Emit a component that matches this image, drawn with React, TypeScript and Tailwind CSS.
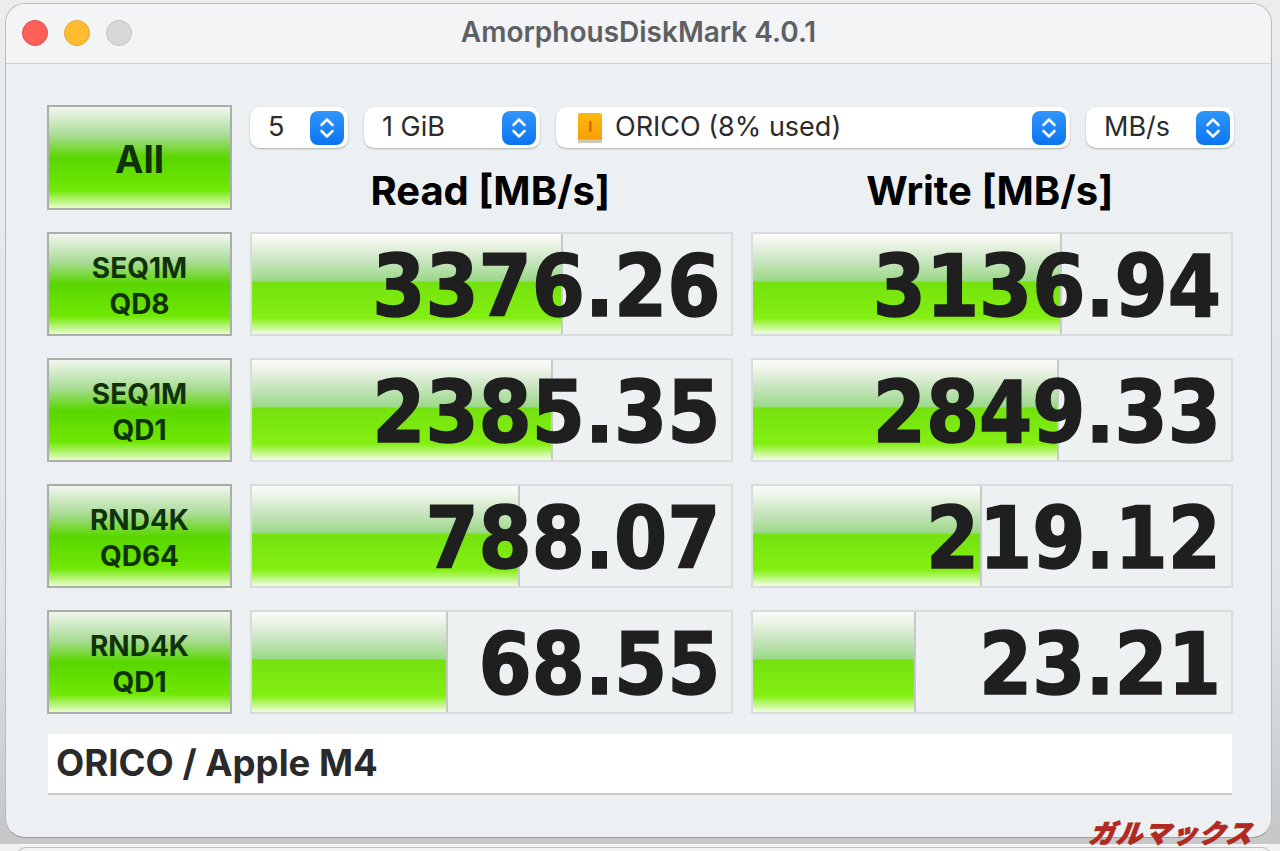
import React from "react";

const rows = [
  { a: "SEQ1M", b: "QD8", r: "3376.26", rw: 312, w: "3136.94", ww: 310 },
  { a: "SEQ1M", b: "QD1", r: "2385.35", rw: 302, w: "2849.33", ww: 307 },
  { a: "RND4K", b: "QD64", r: "788.07", rw: 269, w: "219.12", ww: 230 },
  { a: "RND4K", b: "QD1", r: "68.55", rw: 197, w: "23.21", ww: 164 },
];

function Stepper() {
  return (
    <span className="flex h-[34px] w-[34px] shrink-0 items-center justify-center rounded-[8px] bg-gradient-to-b from-[#2f96fb] to-[#0a74f0]">
      <svg width="18" height="26" viewBox="0 0 18 26" fill="none" stroke="#eef6ff" strokeWidth="2.6" strokeLinecap="round" strokeLinejoin="round">
        <path d="M3.5 10 L9 4.5 L14.5 10" />
        <path d="M3.5 16 L9 21.5 L14.5 16" />
      </svg>
    </span>
  );
}

function Select({ width, children }: { width: string; children: React.ReactNode }) {
  return (
    <div className={`flex h-[41px] items-center justify-between rounded-[10px] bg-white pl-[18px] pr-[4px] text-[27px] text-[#2b2b2b] shadow-[0_1px_2px_rgba(0,0,0,0.28)] ${width}`}>
      {children}
      <Stepper />
    </div>
  );
}

function Bar({ value, width }: { value: string; width: number }) {
  return (
    <div className="relative h-[104px] flex-1 overflow-hidden border-2 border-[#d9dcdd] bg-[#eef1f2]">
      <div
        className="-ml-px h-full border-r-2 border-[#c6c9c9] bg-[linear-gradient(to_bottom,#fafbf8_0%,#f0f6ec_8%,#c6e4bc_28%,#9ad988_47%,#74e20e_48%,#84ef12_84%,#f2fde4_100%)]"
        style={{ width }}
      />
      <span className="absolute right-[10px] top-[7px] font-['DejaVu_Sans_Condensed','DejaVu_Sans',sans-serif] text-[85px] font-bold leading-[92px] text-[#1f1f1f] [-webkit-text-stroke:1.5px_#1f1f1f]">
        {value}
      </span>
    </div>
  );
}

function GreenButton({ children, className }: { children: React.ReactNode; className?: string }) {
  return (
    <div className={`flex w-[185px] shrink-0 flex-col items-center justify-center border-2 border-[#a9aeab] bg-[linear-gradient(to_bottom,#f2f6ef_0%,#a9dc96_28%,#5ad600_50%,#6fe802_82%,#e9fccc_100%)] font-['Inter',sans-serif] font-bold text-[#0f320a] ${className ?? ""}`}>
      {children}
    </div>
  );
}

export default function App() {
  return (
    <div className="relative h-[851px] w-[1280px] overflow-hidden bg-[linear-gradient(to_bottom,#ececec_0%,#e4e4e4_70%,#c8c8c8_97%)] font-['Inter',sans-serif]">
      <div className="ml-[5px] mt-[3px] h-[835px] w-[1267px] overflow-hidden rounded-[20px] border border-[#b9bbbc] border-b-[#9d9e9f] bg-[#edf0f2]">
        <div className="relative flex h-[60px] items-center justify-center border-b border-[#cfd1d2] bg-[#f2f4f6] pb-[3px] text-[28px] font-semibold text-[#5e6062]">
          <div className="absolute left-[16px] top-[16px] flex gap-[16px]">
            <span className="h-[26px] w-[26px] rounded-full border border-[#d9504a] bg-[#fe5f57]" />
            <span className="h-[26px] w-[26px] rounded-full border border-[#dfa436] bg-[#febc2e]" />
            <span className="h-[26px] w-[26px] rounded-full border border-[#c0c2c3] bg-[#d5d7d8]" />
          </div>
          AmorphousDiskMark 4.0.1
        </div>
        <div className="flex flex-col pl-[41px] pr-[38px] pt-[41px]">
          <div className="flex h-[105px] gap-[18px]">
            <GreenButton className="pt-[3px] text-[38px]">All</GreenButton>
            <div className="flex flex-1 flex-col">
              <div className="flex gap-[16px] pt-[2px]">
                <Select width="w-[98px]">5</Select>
                <Select width="w-[176px]">1 GiB</Select>
                <Select width="w-[514px]">
                  <span className="flex items-center gap-[13px] pl-[4px]">
                    <svg width="24" height="30" viewBox="0 0 24 30">
                      <defs>
                        <linearGradient id="book" x1="0" y1="0" x2="0" y2="1">
                          <stop offset="0" stopColor="#fdb90c" />
                          <stop offset="1" stopColor="#f59c05" />
                        </linearGradient>
                      </defs>
                      <rect x="0" y="0" width="24" height="30" rx="2" fill="url(#book)" />
                      <rect x="0" y="26.5" width="24" height="3.5" fill="#cfc8b6" />
                      <rect x="11" y="8" width="2.5" height="11" rx="1.2" fill="#d8660a" />
                    </svg>
                    ORICO (8% used)
                  </span>
                </Select>
                <Select width="w-[148px]">MB/s</Select>
              </div>
              <div className="flex flex-1 gap-[18px] pt-[18px] text-center text-[40px] font-bold leading-[50px] text-black">
                <div className="flex-1 pr-[1px]">Read [MB/s]</div>
                <div className="flex-1 pr-[4px]">Write [MB/s]</div>
              </div>
            </div>
          </div>
          {rows.map((row, i) => (
            <div key={i} className="mt-[22px] flex gap-[18px]">
              <GreenButton className="h-[104px] pt-[4px] text-[28px] leading-[36px]">
                <span>{row.a}</span>
                <span>{row.b}</span>
              </GreenButton>
              <div className="flex flex-1 gap-[18px]">
                <Bar value={row.r} width={row.rw} />
                <Bar value={row.w} width={row.ww} />
              </div>
            </div>
          ))}
          <div className="ml-[1px] mr-[1px] mt-[20px] flex h-[61px] items-center border-b-2 border-[#c9cbcc] bg-white pl-[8px] text-[36.6px] font-bold text-[#2a2a2a]">
            ORICO / Apple M4
          </div>
        </div>
      </div>
      <div className="absolute inset-x-0 top-[844px] h-[7px] bg-[#f2f2f2]" />
      <div className="absolute left-[16px] right-[8px] top-[847px] h-[10px] rounded-t-[14px] border border-[#bdbfc0] bg-[#f2f4f6]" />
      <div className="absolute left-[1087px] top-[818px] origin-bottom-left -skew-x-[20deg] whitespace-nowrap font-['Noto_Sans_CJK_JP',sans-serif] text-[26px] font-black leading-[28px] tracking-[1.5px] text-[#b02a22] [-webkit-text-stroke:1px_#b02a22]">
        ガルマックス
      </div>
    </div>
  );
}
